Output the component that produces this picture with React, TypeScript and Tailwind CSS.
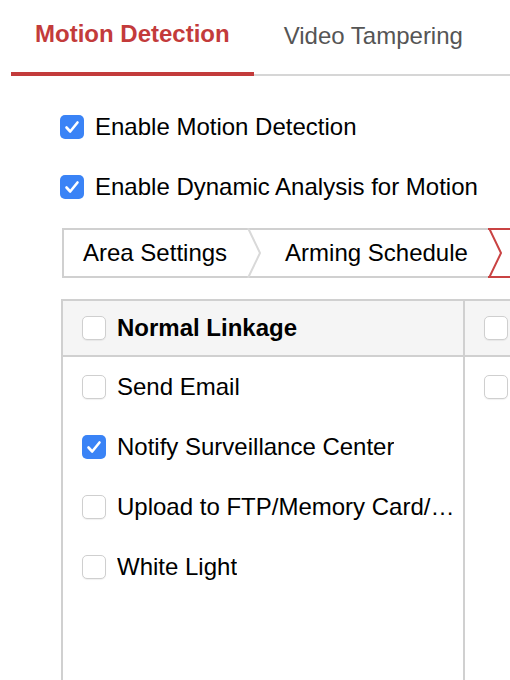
import React from 'react'

const font = "font-['Liberation_Sans','Helvetica',Arial,sans-serif]"

function Checkbox({ checked = false }: { checked?: boolean }): JSX.Element {
    if (checked) {
        return (
            <span className="flex h-6 w-6 shrink-0 items-center justify-center rounded-[5px] bg-[#3a83f6]">
                <svg width="24" height="24" viewBox="0 0 24 24" fill="none">
                    <path
                        d="M6.5 12.5 L10.2 16.5 L17.5 7.5"
                        stroke="white"
                        strokeWidth="2.6"
                        strokeLinecap="round"
                        strokeLinejoin="round"
                    />
                </svg>
            </span>
        )
    }
    return (
        <span className="block h-6 w-6 shrink-0 rounded-[5px] border border-[#cfcfcf] bg-white shadow-[0_1px_1px_rgba(0,0,0,0.06)]" />
    )
}

function Chevron({ color, lines }: { color: string; lines: string }): JSX.Element {
    return (
        <svg width="14" height="50" viewBox="0 0 14 50" className="shrink-0">
            <line x1="0" y1="1" x2="14" y2="1" stroke={lines} strokeWidth="2" />
            <line x1="0" y1="49" x2="14" y2="49" stroke={lines} strokeWidth="2" />
            <polyline points="1,0 13,25 1,50" fill="none" stroke={color} strokeWidth="2" />
        </svg>
    )
}

const linkageItems = [
    { label: 'Send Email', checked: false },
    { label: 'Notify Surveillance Center', checked: true },
    { label: 'Upload to FTP/Memory Card/NAS', checked: false },
    { label: 'White Light', checked: false },
]

export default function App(): JSX.Element {
    return (
        <div className={`${font} relative h-[680px] w-[510px] overflow-hidden bg-white text-[24px] text-black`}>
            {/* tabs */}
            <div className="ml-[11px] flex h-[76px] w-[499px] border-b-2 border-[#d6d6d6]">
                <div className="-mb-[2px] flex h-[76px] items-center border-b-4 border-[#c33b3b] px-6 pb-[4px] font-bold text-[#c33b3b]">
                    Motion Detection
                </div>
                <div className="flex h-[74px] items-center pl-[30px] pb-[2px] text-[#555555]">Video Tampering</div>
            </div>

            <div className="mt-[21px]">
                <label className="ml-[60px] flex h-[60px] items-center gap-[11px]">
                    <Checkbox checked />
                    <span>Enable Motion Detection</span>
                </label>
                <label className="ml-[60px] flex h-[60px] items-center gap-[11px]">
                    <Checkbox checked />
                    <span>Enable Dynamic Analysis for Motion</span>
                </label>
            </div>

            {/* steps */}
            <div className="ml-[62px] mt-[11px] flex h-[50px] w-[700px]">
                <div className="flex h-[50px] items-center border-y-2 border-l-2 border-[#d0d0d0] pl-[19px] pr-[20px]">
                    Area Settings
                </div>
                <Chevron color="#d9d9d9" lines="#d0d0d0" />
                <div className="flex h-[50px] items-center border-y-2 border-[#d0d0d0] pl-[24px] pr-[20px]">
                    Arming Schedule
                </div>
                <Chevron color="#c94343" lines="#c94343" />
                <div className="h-[50px] flex-1 border-y-2 border-[#c94343]" />
            </div>

            {/* linkage table */}
            <div className="ml-[61px] mt-[21px] flex h-[420px] w-[700px] border-t-2 border-[#d0d0d0]">
                <div className="w-[404px] shrink-0 border-x-2 border-[#d0d0d0]">
                    <div className="flex h-[56px] items-center gap-[11px] border-b-2 border-[#d0d0d0] bg-[#f5f5f5] pl-[19px] font-bold">
                        <Checkbox />
                        <span>Normal Linkage</span>
                    </div>
                    {linkageItems.map((item) => (
                        <div key={item.label} className="flex h-[60px] items-center gap-[11px] pl-[19px] pr-[4px]">
                            <Checkbox checked={item.checked} />
                            <span className="truncate">{item.label}</span>
                        </div>
                    ))}
                </div>
                <div className="flex-1">
                    <div className="flex h-[56px] items-center border-b-2 border-[#d0d0d0] bg-[#f5f5f5] pl-[19px]">
                        <Checkbox />
                    </div>
                    <div className="flex h-[60px] items-center pl-[19px]">
                        <Checkbox />
                    </div>
                </div>
            </div>
        </div>
    )
}
